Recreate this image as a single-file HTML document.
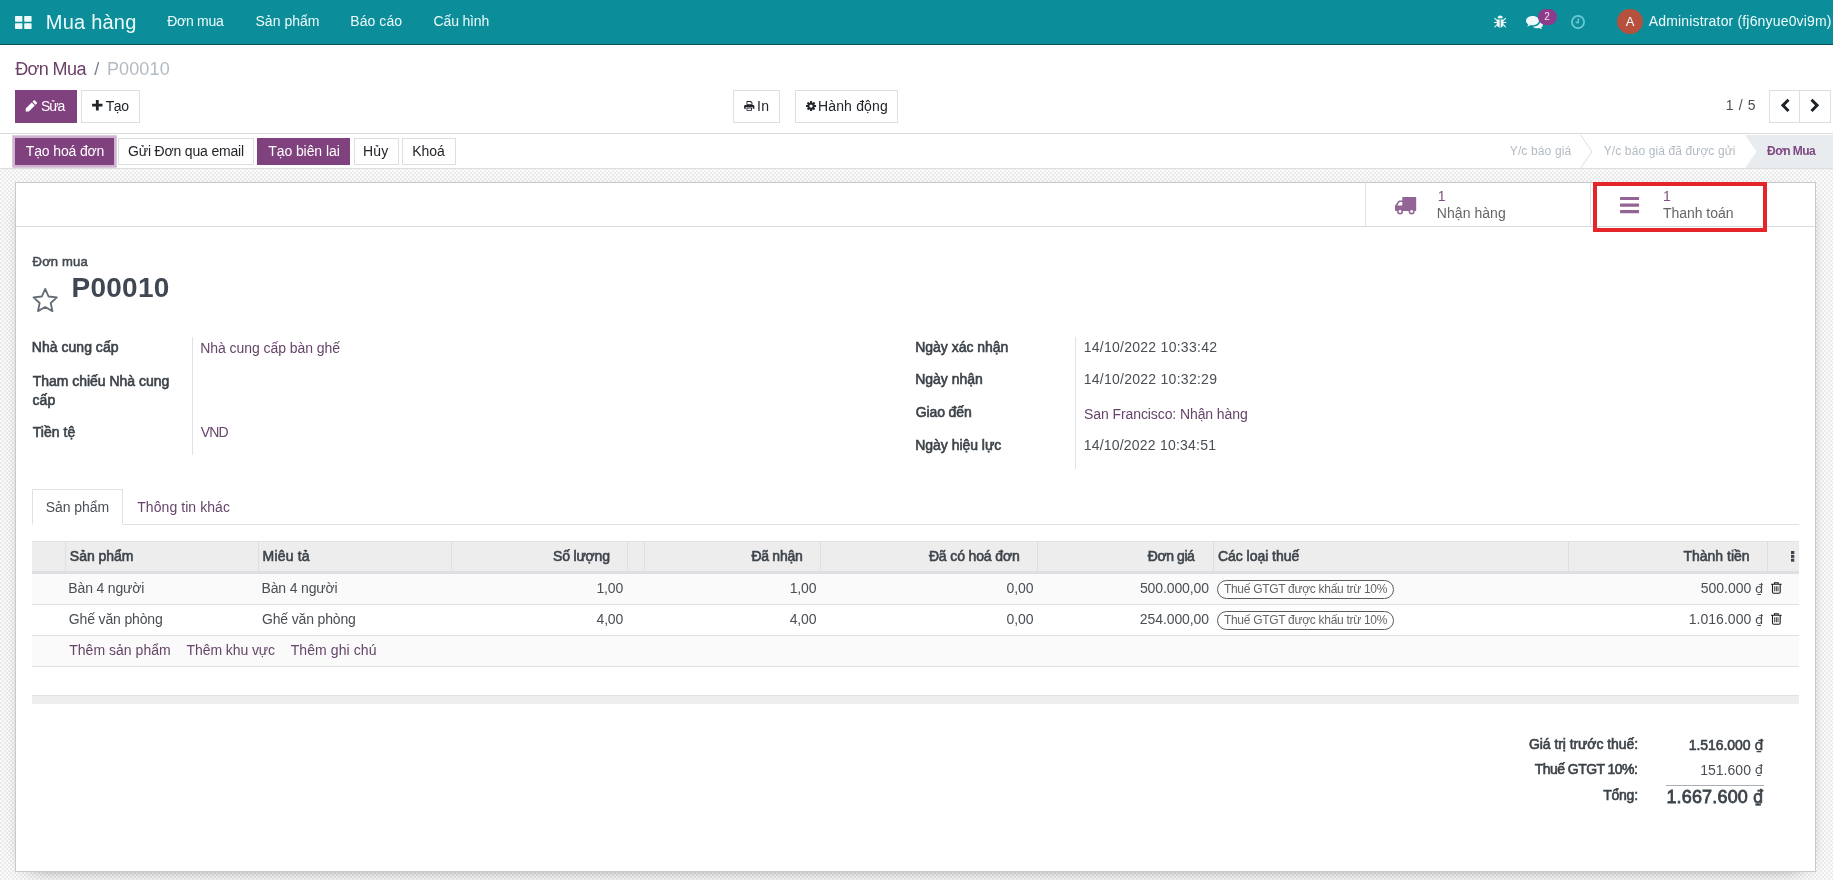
<!DOCTYPE html>
<html lang="vi">
<head>
<meta charset="utf-8">
<title>Đơn Mua - P00010</title>
<style>
*{box-sizing:border-box;margin:0;padding:0}
html,body{width:1833px;height:880px;overflow:hidden}
body{position:relative;font-family:"Liberation Sans",sans-serif;font-size:14px;color:#4c4c4c;
 background-color:#fbfbfb;
 background-image:linear-gradient(45deg,#ececec 25%,transparent 25%,transparent 75%,#ececec 75%),linear-gradient(45deg,#ececec 25%,transparent 25%,transparent 75%,#ececec 75%);
 background-size:4px 4px;background-position:0 0,2px 2px}
.a{position:absolute}
.t{position:absolute;white-space:nowrap}
svg{position:absolute;overflow:visible}
#nav{left:0;top:0;width:1833px;height:45px;background:#0c8e9a;border-bottom:1px solid #10505b}
#cp{left:0;top:45px;width:1833px;height:89px;background:#fff;border-bottom:1px solid #d9dadc}
#sb{left:0;top:134px;width:1833px;height:35px;background:#fff;border-bottom:1px solid #dcdcdc}
#sheet{left:15px;top:182px;width:1801px;height:690px;background:#fff;border:1px solid #c9c9c9;box-shadow:0 5px 20px -15px #000}
.btn{position:absolute;border:1px solid #dcdee1;background:#fff}
.btn.p{background:#80417f;border-color:#80417f}
.ln{position:absolute;background:#dfe1e4}
</style>
</head>
<body>
<!-- top navbar -->
<div id="nav" class="a"></div>
<svg style="left:14.800px;top:16px" width="16.600" height="13" viewBox="0 0 16.600 13"><g fill="#eefafa"><rect x="0" y="0" width="7.400" height="5.800" rx=".7"/><rect x="9.200" y="0" width="7.400" height="5.800" rx=".7"/><rect x="0" y="7.200" width="7.400" height="5.800" rx=".7"/><rect x="9.200" y="7.200" width="7.400" height="5.800" rx=".7"/></g></svg>
<!-- bug -->
<svg style="left:1494px;top:15px" width="12.4" height="13" viewBox="0 0 24 25"><g fill="#eefafa" stroke="#eefafa" stroke-linecap="round"><path d="M7 6a5 5 0 0 1 10 0z" stroke="none"/><path d="M5.5 8.5h13v9a6.5 6.500 0 0 1-13 0z" stroke="none"/><path d="M5.500 10.500L1.500 6.500M18.500 10.500l4-4M5.500 14.500H.8M18.500 14.500h4.700M5.500 19l-3.700 4M18.500 19l3.700 4" stroke-width="2" fill="none"/><path d="M12 10v13" stroke="#0c8e9a" stroke-width="1.800"/></g></svg>
<!-- comments -->
<svg style="left:1526px;top:16px" width="17" height="13" viewBox="0 0 34 26"><g fill="#eefafa"><path d="M13 0C5.800 0 0 4.300 0 9.500c0 3 1.900 5.700 4.900 7.400-.5 1.600-1.500 3-2.900 4.100 2.800-.2 5.300-1.200 7.200-2.800 1.200.3 2.500.4 3.800.4 7.200 0 13-4.300 13-9.500S20.200 0 13 0z"/><path d="M28.500 9.800c0 .3 0 .5 0 .8 0 5.900-6.300 10.500-14.500 10.700 2.200 2 5.500 3.200 9.200 3.200 1.100 0 2.200-.1 3.200-.3 1.600 1.300 3.700 1.900 5.900 1.800-1.100-.9-1.800-2-2.100-3.100 2.400-1.400 3.900-3.500 3.900-5.900 0-3.100-2.200-5.700-5.600-7.200z"/></g></svg>
<div class="a" style="left:1538.200px;top:9.400px;width:18.500px;height:15.700px;border-radius:8px;background:#8d3c8c"></div>
<!-- clock -->
<svg style="left:1571px;top:15px" width="14" height="14" viewBox="0 0 14 14"><g fill="none" stroke="#6bcbd6" stroke-width="1.700"><circle cx="7" cy="7" r="6.100"/><path d="M7.300 3.500v4H4.600" stroke-width="1.400"/></g></svg>
<div class="a" style="left:1617.400px;top:8.800px;width:25.600px;height:25.600px;border-radius:50%;background:#b5513d"></div>

<!-- control panel -->
<div id="cp" class="a"></div>
<div class="btn p" style="left:15px;top:90px;width:62px;height:33px"></div>
<svg style="left:25.200px;top:99.900px" width="12.500" height="12.100" viewBox="0 0 12 12"><path fill="#fff" d="M8.300.6a1.100 1.100 0 0 1 1.500 0l1.600 1.600a1.100 1.100 0 0 1 0 1.500L10.300 4.800 7.200 1.700zM6.500 2.400l3.100 3.100-6 6H.500V8.400z"/></svg>
<div class="btn" style="left:81px;top:90px;width:59px;height:33px"></div>
<svg style="left:91.600px;top:100.400px" width="10.600" height="10.400" viewBox="0 0 10 10"><path fill="#212529" d="M3.650 0h2.700v3.650H10v2.700H6.350V10H3.650V6.350H0V3.650h3.650z"/></svg>
<div class="btn" style="left:733px;top:90px;width:47px;height:33px"></div>
<svg style="left:744.200px;top:101.300px" width="10.500" height="9.800" viewBox="0 0 21 20"><g fill="#212529"><path d="M5 0h9l3 3v5H5z M6.800 1.800v4.700h8.400V3.700h-2V1.800z" fill-rule="evenodd"/><path d="M2.500 8h16A2.500 2.500 0 0 1 21 10.500V16h-3.500v-3.500h-14V16H0v-5.500A2.500 2.500 0 0 1 2.500 8z"/><path d="M5 13.500h11V20H5z M6.800 15.200v3h7.400v-3z" fill-rule="evenodd"/></g></svg>
<div class="btn" style="left:795px;top:90px;width:103px;height:33px"></div>
<svg style="left:805.700px;top:101px" width="10.100" height="10.100" viewBox="-10 -10 20 20"><g fill="#212529"><path fill-rule="evenodd" d="M0-7.200A7.200 7.200 0 1 0 0 7.200 7.200 7.200 0 1 0 0-7.200zM0-3.300A3.300 3.300 0 1 1 0 3.300 3.300 3.300 0 1 1 0-3.300z"/><g id="tg"><rect x="-2" y="-10" width="4" height="4.500" rx=".6"/><rect x="-2" y="5.500" width="4" height="4.500" rx=".6"/></g><use href="#tg" transform="rotate(45)"/><use href="#tg" transform="rotate(90)"/><use href="#tg" transform="rotate(135)"/></g></svg>
<div class="btn" style="left:1769px;top:90px;width:31px;height:33px"></div>
<div class="btn" style="left:1799px;top:90px;width:32px;height:33px"></div>
<svg style="left:1775px;top:95px" width="50" height="22" viewBox="1775 95 50 22"><g fill="none" stroke="#1c2126" stroke-width="2.900"><path d="M1788.500 99.700L1782.850 105.350 1788.500 111"/><path d="M1811.500 99.700L1817.150 105.350 1811.500 111"/></g></svg>

<!-- status bar -->
<div id="sb" class="a"></div>
<div class="btn p" style="left:15px;top:138px;width:99px;height:27px;box-shadow:0 0 0 2.700px #cfb3d1"></div>
<div class="btn" style="left:117.500px;top:138px;width:136.500px;height:27px"></div>
<div class="btn p" style="left:257px;top:138px;width:93px;height:27px"></div>
<div class="btn" style="left:353.500px;top:138px;width:45.500px;height:27px"></div>
<div class="btn" style="left:402px;top:138px;width:54px;height:27px"></div>
<svg style="left:1570px;top:135px" width="263" height="33" viewBox="1570 135 263 33"><path d="M1745 135h88v33h-88l11.500-16.500z" fill="#e9ecef"/><path d="M1580.700 135l11.200 16.500-11.200 16.500" fill="none" stroke="#e3e6e9" stroke-width="1.200"/></svg>

<!-- sheet -->
<div id="sheet" class="a"></div>
<div class="ln" style="left:16px;top:226px;width:1799px;height:1px;background:#d9dcdf"></div>
<div class="ln" style="left:1365px;top:183px;width:1px;height:43px"></div>
<div class="ln" style="left:1590px;top:183px;width:1px;height:43px"></div>
<!-- truck -->
<svg style="left:1395px;top:196.900px" width="21.200" height="17.500" viewBox="0 0 21.200 17.500"><g fill="#926596"><path d="M7.300 0h13.900v13.900H.5L0 13.300V8.700L3.300 4.100 4.500 3.500h2.800z M2.200 8.400h5.100V5H4.600z" fill-rule="evenodd"/><circle cx="5.050" cy="14.500" r="3"/><circle cx="16.650" cy="14.500" r="3"/><circle cx="5.050" cy="14.500" r="1.400" fill="#fff"/><circle cx="16.650" cy="14.500" r="1.400" fill="#fff"/></g></svg>
<!-- bars -->
<svg style="left:1620px;top:197px" width="19.100" height="16.200" viewBox="0 0 19.100 16.200"><g fill="#926596"><rect x="0" y="0" width="19.100" height="3.100" rx=".6"/><rect x="0" y="6.550" width="19.100" height="3.100" rx=".6"/><rect x="0" y="13.100" width="19.100" height="3.100" rx=".6"/></g></svg>
<!-- red highlight -->
<div class="a" style="left:1593px;top:182px;width:174px;height:50px;border:4px solid #e4262a"></div>
<!-- star -->
<svg style="left:31px;top:286px" width="28" height="28" viewBox="31 286 28 28"><path d="M45.20 288.90 L48.61 296.51 L56.90 297.40 L50.72 302.99 L52.43 311.15 L45.20 307.00 L37.97 311.15 L39.68 302.99 L33.50 297.40 L41.79 296.51z" fill="none" stroke="#636c75" stroke-width="1.800" stroke-linejoin="round"/></svg>
<!-- group separators -->
<div class="ln" style="left:192px;top:337px;width:1px;height:118px;background:#dfe2e6"></div>
<div class="ln" style="left:1075px;top:337px;width:1px;height:132px;background:#dfe2e6"></div>
<!-- tabs -->
<div class="ln" style="left:32px;top:524px;width:1767px;height:1px"></div>
<div class="a" style="left:32px;top:489px;width:91px;height:36px;background:#fff;border:1px solid #dee2e6;border-bottom-color:#fff"></div>
<!-- table -->
<div class="a" style="left:32px;top:541px;width:1767px;height:33px;background:#ededed;border-top:1px solid #e3e3e3;border-bottom:3px solid #dddfe2"></div>
<div class="a" style="left:32px;top:574px;width:1767px;height:30px;background:#fafafa"></div>
<div class="a" style="left:32px;top:635px;width:1767px;height:31px;background:#fafafa"></div>
<div class="ln" style="left:32px;top:604px;width:1767px;height:1px"></div>
<div class="ln" style="left:32px;top:635px;width:1767px;height:1px"></div>
<div class="ln" style="left:32px;top:666px;width:1767px;height:1px"></div>
<div class="ln c" style="left:65px"></div><div class="ln c" style="left:258px"></div><div class="ln c" style="left:451px"></div><div class="ln c" style="left:627px"></div><div class="ln c" style="left:644px"></div><div class="ln c" style="left:820px"></div><div class="ln c" style="left:1037px"></div><div class="ln c" style="left:1213px"></div><div class="ln c" style="left:1568px"></div><div class="ln c" style="left:1767px"></div>
<style>.ln.c{top:542px;width:1px;height:29px;background:#dcdfe2}
.tag{position:absolute;left:1217px;width:177px;height:18.500px;border:1px solid #5c5c5c;border-radius:9.500px;background:#fff}</style>
<div class="tag" style="top:580px"></div>
<div class="tag" style="top:611px"></div>
<!-- kebab -->
<svg style="left:1791px;top:551.300px" width="3.300" height="10.700" viewBox="0 0 3.300 10.700"><g fill="#3d444b"><rect width="3.300" height="3"/><rect y="3.850" width="3.300" height="3"/><rect y="7.700" width="3.300" height="3"/></g></svg>
<!-- trash -->
<svg id="tr1" style="left:1771.300px;top:581.900px" width="10.700" height="11.800" viewBox="0 0 21.400 23.600"><g fill="none" stroke="#1d1d1d" stroke-width="2.200"><path d="M0 4.600h21.400M7 4.600V1.500h7.400v3.100M3 4.600v15.400a2.400 2.400 0 0 0 2.400 2.400h10.600a2.400 2.400 0 0 0 2.400-2.400V4.600"/><path d="M7.400 8.500v10M10.700 8.500v10M14 8.500v10" stroke-width="1.700"/></g></svg>
<svg style="left:1771.300px;top:613.100px" width="10.700" height="11.800" viewBox="0 0 21.400 23.600"><g fill="none" stroke="#1d1d1d" stroke-width="2.200"><path d="M0 4.600h21.400M7 4.600V1.500h7.400v3.100M3 4.600v15.400a2.400 2.400 0 0 0 2.400 2.400h10.600a2.400 2.400 0 0 0 2.400-2.400V4.600"/><path d="M7.400 8.500v10M10.700 8.500v10M14 8.500v10" stroke-width="1.700"/></g></svg>
<!-- bottom bar -->
<div class="a" style="left:32px;top:695px;width:1767px;height:9px;background:#eee;border-top:1px solid #e2e2e2"></div>
<!-- total separator -->
<div class="ln" style="left:1666px;top:785px;width:97.500px;height:1px;background:#a9aeb4"></div>

<div id="txt" style="position:absolute;left:0;top:0;width:1833px;height:880px;will-change:transform">
<!-- currency signs -->
<style>.d{position:absolute;font-family:"DejaVu Sans",sans-serif;font-size:13px;line-height:26px;color:#4a4f55}</style>
<span class="d" style="left:1754.900px;top:576px">₫</span>
<span class="d" style="left:1754.900px;top:607px">₫</span>
<span class="d" style="left:1754.500px;top:732px;font-size:14px;color:#3b4248;-webkit-text-stroke:.4px">₫</span>
<span class="d" style="left:1754.800px;top:757px">₫</span>
<span class="d" style="left:1753px;top:784px;font-family:'DejaVu Sans Condensed','DejaVu Sans',sans-serif;font-size:18px;color:#3b4248;-webkit-text-stroke:.7px">₫</span>
<span class="t" style="left:45.86px;top:8px;font-size:20px;line-height:28px;color:#eefafa;letter-spacing:0.211px;">Mua hàng</span>
<span class="t" style="left:167.20px;top:11px;font-size:14px;line-height:20px;color:#eefafa;letter-spacing:-0.284px;">Đơn mua</span>
<span class="t" style="left:255.46px;top:11px;font-size:14px;line-height:20px;color:#eefafa;letter-spacing:0.034px;">Sản phẩm</span>
<span class="t" style="left:350.25px;top:11px;font-size:14px;line-height:20px;color:#eefafa;letter-spacing:0.077px;">Báo cáo</span>
<span class="t" style="left:433.59px;top:11px;font-size:14px;line-height:20px;color:#eefafa;letter-spacing:-0.171px;">Cấu hình</span>
<span class="t" style="left:1648.77px;top:11px;font-size:14px;line-height:20px;color:#eefafa;letter-spacing:0.168px;">Administrator (fj6nyue0vi9m)</span>
<span class="t" style="left:1544.30px;top:10px;font-size:10px;line-height:14px;color:#f3e6f3;">2</span>
<span class="t" style="left:1625.77px;top:13px;font-size:13px;line-height:18px;color:#fff;">A</span>
<span class="t" style="left:15.18px;top:57px;font-size:18px;line-height:25px;color:#6a3f66;letter-spacing:-0.601px;">Đơn Mua</span>
<span class="t" style="left:94.30px;top:57px;font-size:18px;line-height:25px;color:#7a828a;">/</span>
<span class="t" style="left:106.92px;top:57px;font-size:18px;line-height:25px;color:#b3bbc2;letter-spacing:0.144px;">P00010</span>
<span class="t" style="left:40.96px;top:96px;font-size:14px;line-height:20px;color:#fff;letter-spacing:-1.080px;">Sửa</span>
<span class="t" style="left:105.79px;top:96px;font-size:14px;line-height:20px;color:#212529;letter-spacing:-0.461px;">Tạo</span>
<span class="t" style="left:757.11px;top:96px;font-size:14px;line-height:20px;color:#212529;letter-spacing:0.325px;">In</span>
<span class="t" style="left:817.95px;top:96px;font-size:14px;line-height:20px;color:#212529;letter-spacing:0.168px;">Hành động</span>
<span class="t" style="left:1725.73px;top:95px;font-size:14px;line-height:20px;color:#4a4f55;letter-spacing:0.628px;">1 / 5</span>
<span class="t" style="left:25.79px;top:141px;font-size:14px;line-height:20px;color:#fff;letter-spacing:-0.139px;">Tạo hoá đơn</span>
<span class="t" style="left:128.00px;top:141px;font-size:14px;line-height:20px;color:#212529;letter-spacing:-0.174px;">Gửi Đơn qua email</span>
<span class="t" style="left:268.19px;top:141px;font-size:14px;line-height:20px;color:#fff;letter-spacing:-0.075px;">Tạo biên lai</span>
<span class="t" style="left:363.05px;top:141px;font-size:14px;line-height:20px;color:#212529;letter-spacing:0.190px;">Hủy</span>
<span class="t" style="left:412.15px;top:141px;font-size:14px;line-height:20px;color:#212529;letter-spacing:-0.049px;">Khoá</span>
<span class="t" style="left:1509.74px;top:143px;font-size:12px;line-height:17px;color:#b3bbc2;letter-spacing:0.142px;">Y/c báo giá</span>
<span class="t" style="left:1603.74px;top:143px;font-size:12px;line-height:17px;color:#b3bbc2;letter-spacing:0.111px;">Y/c báo giá đã được gửi</span>
<span class="t" style="left:1767.05px;top:143px;font-size:12px;line-height:17px;color:#7d4782;letter-spacing:-0.532px;font-weight:700;">Đơn Mua</span>
<span class="t" style="left:1437.83px;top:186px;font-size:14px;line-height:20px;color:#7b5380;">1</span>
<span class="t" style="left:1436.85px;top:203px;font-size:14px;line-height:20px;color:#666;letter-spacing:0.043px;">Nhận hàng</span>
<span class="t" style="left:1662.93px;top:186px;font-size:14px;line-height:20px;color:#7b5380;">1</span>
<span class="t" style="left:1662.89px;top:203px;font-size:14px;line-height:20px;color:#666;letter-spacing:-0.023px;">Thanh toán</span>
<span class="t" style="left:32.58px;top:253px;font-size:13px;line-height:18px;color:#444b52;letter-spacing:0.183px;-webkit-text-stroke:0.55px;">Đơn mua</span>
<span class="t" style="left:71.53px;top:268px;font-size:28px;line-height:39px;color:#3f4852;letter-spacing:0.257px;font-weight:700;">P00010</span>
<span class="t" style="left:31.85px;top:337px;font-size:14px;line-height:20px;color:#3b4248;letter-spacing:0.023px;-webkit-text-stroke:0.59px;">Nhà cung cấp</span>
<span class="t" style="left:32.68px;top:371px;font-size:14px;line-height:20px;color:#3b4248;letter-spacing:-0.024px;-webkit-text-stroke:0.59px;">Tham chiếu Nhà cung</span>
<span class="t" style="left:32.40px;top:390px;font-size:14px;line-height:20px;color:#3b4248;letter-spacing:0.111px;-webkit-text-stroke:0.59px;">cấp</span>
<span class="t" style="left:32.68px;top:422px;font-size:14px;line-height:20px;color:#3b4248;letter-spacing:0.061px;-webkit-text-stroke:0.59px;">Tiền tệ</span>
<span class="t" style="left:200.15px;top:338px;font-size:14px;line-height:20px;color:#66446a;letter-spacing:-0.050px;">Nhà cung cấp bàn ghế</span>
<span class="t" style="left:200.74px;top:422px;font-size:14px;line-height:20px;color:#66446a;letter-spacing:-0.814px;">VND</span>
<span class="t" style="left:915.25px;top:337px;font-size:14px;line-height:20px;color:#3b4248;letter-spacing:-0.027px;-webkit-text-stroke:0.59px;">Ngày xác nhận</span>
<span class="t" style="left:915.25px;top:369px;font-size:14px;line-height:20px;color:#3b4248;letter-spacing:-0.031px;-webkit-text-stroke:0.59px;">Ngày nhận</span>
<span class="t" style="left:915.69px;top:402px;font-size:14px;line-height:20px;color:#3b4248;letter-spacing:-0.114px;-webkit-text-stroke:0.59px;">Giao đến</span>
<span class="t" style="left:915.25px;top:435px;font-size:14px;line-height:20px;color:#3b4248;letter-spacing:-0.032px;-webkit-text-stroke:0.59px;">Ngày hiệu lực</span>
<span class="t" style="left:1083.63px;top:337px;font-size:14px;line-height:20px;color:#4a4f55;letter-spacing:0.273px;">14/10/2022 10:33:42</span>
<span class="t" style="left:1083.63px;top:369px;font-size:14px;line-height:20px;color:#4a4f55;letter-spacing:0.271px;">14/10/2022 10:32:29</span>
<span class="t" style="left:1084.06px;top:404px;font-size:14px;line-height:20px;color:#66446a;letter-spacing:-0.092px;">San Francisco: Nhận hàng</span>
<span class="t" style="left:1083.63px;top:435px;font-size:14px;line-height:20px;color:#4a4f55;letter-spacing:0.216px;">14/10/2022 10:34:51</span>
<span class="t" style="left:45.76px;top:497px;font-size:14px;line-height:20px;color:#495057;letter-spacing:-0.052px;">Sản phẩm</span>
<span class="t" style="left:137.19px;top:497px;font-size:14px;line-height:20px;color:#66446a;letter-spacing:0.073px;">Thông tin khác</span>
<span class="t" style="left:69.86px;top:546px;font-size:14px;line-height:20px;color:#3d444b;letter-spacing:-0.021px;-webkit-text-stroke:0.59px;">Sản phẩm</span>
<span class="t" style="left:262.55px;top:546px;font-size:14px;line-height:20px;color:#3d444b;letter-spacing:0.192px;-webkit-text-stroke:0.59px;">Miêu tả</span>
<span class="t" style="left:553.06px;top:546px;font-size:14px;line-height:20px;color:#3d444b;letter-spacing:-0.186px;-webkit-text-stroke:0.59px;">Số lượng</span>
<span class="t" style="left:751.40px;top:546px;font-size:14px;line-height:20px;color:#3d444b;letter-spacing:-0.269px;-webkit-text-stroke:0.59px;">Đã nhận</span>
<span class="t" style="left:928.90px;top:546px;font-size:14px;line-height:20px;color:#3d444b;letter-spacing:-0.137px;-webkit-text-stroke:0.59px;">Đã có hoá đơn</span>
<span class="t" style="left:1147.80px;top:546px;font-size:14px;line-height:20px;color:#3d444b;letter-spacing:-0.424px;-webkit-text-stroke:0.59px;">Đơn giá</span>
<span class="t" style="left:1217.88px;top:546px;font-size:14px;line-height:20px;color:#3d444b;letter-spacing:-0.025px;-webkit-text-stroke:0.59px;">Các loại thuế</span>
<span class="t" style="left:1683.38px;top:546px;font-size:14px;line-height:20px;color:#3d444b;letter-spacing:0.009px;-webkit-text-stroke:0.59px;">Thành tiền</span>
<span class="t" style="left:68.35px;top:578px;font-size:14px;line-height:20px;color:#4a4f55;letter-spacing:-0.162px;">Bàn 4 người</span>
<span class="t" style="left:261.55px;top:578px;font-size:14px;line-height:20px;color:#4a4f55;letter-spacing:-0.162px;">Bàn 4 người</span>
<span class="t" style="left:596.53px;top:578px;font-size:14px;line-height:20px;color:#4a4f55;letter-spacing:-0.178px;">1,00</span>
<span class="t" style="left:789.73px;top:578px;font-size:14px;line-height:20px;color:#4a4f55;letter-spacing:-0.178px;">1,00</span>
<span class="t" style="left:1006.45px;top:578px;font-size:14px;line-height:20px;color:#4a4f55;letter-spacing:-0.085px;">0,00</span>
<span class="t" style="left:1139.94px;top:578px;font-size:14px;line-height:20px;color:#4a4f55;letter-spacing:-0.107px;">500.000,00</span>
<span class="t" style="left:1223.93px;top:581px;font-size:12px;line-height:17px;color:#666;letter-spacing:-0.293px;">Thuế GTGT được khấu trừ 10%</span>
<span class="t" style="left:1700.74px;top:578px;font-size:14px;line-height:20px;color:#4a4f55;letter-spacing:-0.017px;">500.000</span>
<span class="t" style="left:68.80px;top:609px;font-size:14px;line-height:20px;color:#4a4f55;letter-spacing:-0.153px;">Ghế văn phòng</span>
<span class="t" style="left:262.00px;top:609px;font-size:14px;line-height:20px;color:#4a4f55;letter-spacing:-0.153px;">Ghế văn phòng</span>
<span class="t" style="left:596.58px;top:609px;font-size:14px;line-height:20px;color:#4a4f55;letter-spacing:-0.193px;">4,00</span>
<span class="t" style="left:789.78px;top:609px;font-size:14px;line-height:20px;color:#4a4f55;letter-spacing:-0.193px;">4,00</span>
<span class="t" style="left:1006.45px;top:609px;font-size:14px;line-height:20px;color:#4a4f55;letter-spacing:-0.085px;">0,00</span>
<span class="t" style="left:1139.80px;top:609px;font-size:14px;line-height:20px;color:#4a4f55;letter-spacing:-0.091px;">254.000,00</span>
<span class="t" style="left:1223.93px;top:612px;font-size:12px;line-height:17px;color:#666;letter-spacing:-0.293px;">Thuế GTGT được khấu trừ 10%</span>
<span class="t" style="left:1688.73px;top:609px;font-size:14px;line-height:20px;color:#4a4f55;letter-spacing:0.029px;">1.016.000</span>
<span class="t" style="left:69.19px;top:640px;font-size:14px;line-height:20px;color:#66446a;letter-spacing:0.032px;">Thêm sản phẩm</span>
<span class="t" style="left:186.59px;top:640px;font-size:14px;line-height:20px;color:#66446a;letter-spacing:-0.093px;">Thêm khu vực</span>
<span class="t" style="left:290.69px;top:640px;font-size:14px;line-height:20px;color:#66446a;letter-spacing:0.089px;">Thêm ghi chú</span>
<span class="t" style="left:1528.99px;top:734px;font-size:14px;line-height:20px;color:#3b4248;letter-spacing:-0.070px;-webkit-text-stroke:0.59px;">Giá trị trước thuế:</span>
<span class="t" style="left:1688.63px;top:735px;font-size:14px;line-height:20px;color:#3b4248;letter-spacing:-0.032px;-webkit-text-stroke:0.59px;">1.516.000</span>
<span class="t" style="left:1534.78px;top:759px;font-size:14px;line-height:20px;color:#3b4248;letter-spacing:-0.552px;-webkit-text-stroke:0.59px;">Thuế GTGT 10%:</span>
<span class="t" style="left:1700.13px;top:760px;font-size:14px;line-height:20px;color:#4a4f55;letter-spacing:0.034px;">151.600</span>
<span class="t" style="left:1603.18px;top:785px;font-size:14px;line-height:20px;color:#3b4248;letter-spacing:-0.224px;-webkit-text-stroke:0.59px;">Tổng:</span>
<span class="t" style="left:1666.41px;top:785px;font-size:18px;line-height:25px;color:#3b4248;letter-spacing:0.168px;-webkit-text-stroke:0.76px;">1.667.600</span>
</div>
</body>
</html>
